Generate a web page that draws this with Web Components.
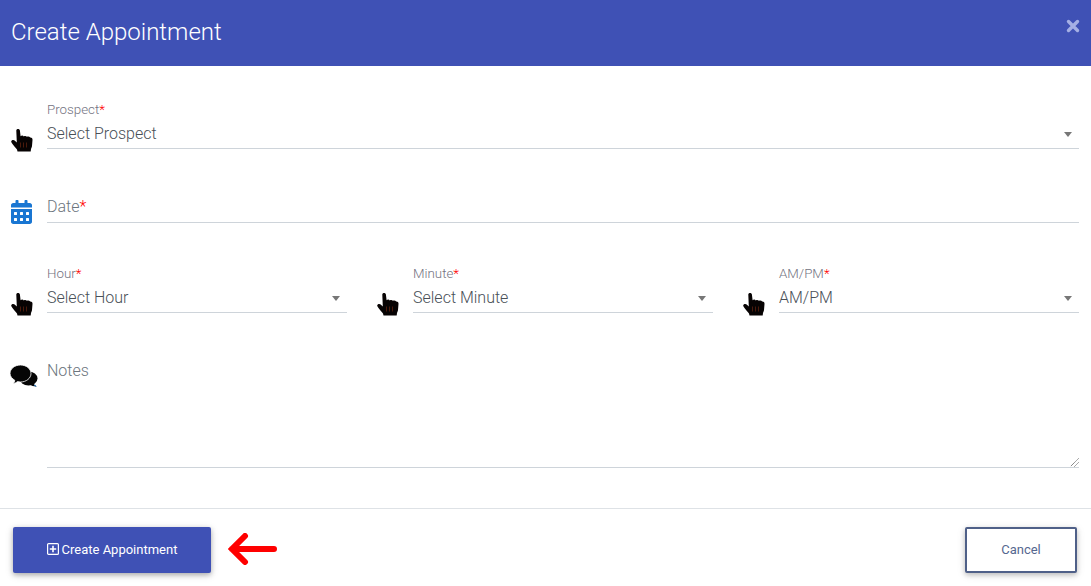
<!DOCTYPE html>
<html><head><meta charset="utf-8"><style>
html,body{margin:0;padding:0;background:#fff;}
body{font-family:Roboto,"Liberation Sans",sans-serif;width:1091px;height:586px;overflow:hidden;}
</style></head><body>
<appt-modal>
  <appt-row style="padding-top:34px;">
    <appt-select label="Prospect" value="Select Prospect"></appt-select>
  </appt-row>
  <appt-row style="padding-top:45px;">
    <appt-date label="Date"></appt-date>
  </appt-row>
  <appt-row style="padding-top:41px;" cols="3">
    <appt-select label="Hour" value="Select Hour"></appt-select>
    <appt-select label="Minute" value="Select Minute"></appt-select>
    <appt-select label="AM/PM" value="AM/PM"></appt-select>
  </appt-row>
  <appt-row style="padding-top:46px;">
    <appt-notes label="Notes"></appt-notes>
  </appt-row>
</appt-modal>
<script>
const HAND = `<svg width="22" height="24" viewBox="0 0 22 24"><path fill="#070303" d="M5.300 2.500C5.300 .5 8.700 .5 8.900 2.500L9.600 8.300C10.500 7.300 12 7.400 12.800 8.400C13.800 7.700 15.200 7.900 15.900 8.800C17 8.200 18.500 8.400 19.200 9.400C20.500 9.200 21.700 10.300 21.500 12L21 18C20.800 19.500 20.200 20.300 20 21L19.700 23.500L6.500 23.500L6 21.500C4.800 20 3 18 1.500 16C0 14.500-.2 13.200.8 12.400C2 11.600 3.400 12.200 4.200 13L5.800 14.500Z"/><path stroke="#4a1a0c" stroke-width="1" d="M9.500 14.500v5M12.500 14.500v5M15.500 14.500v5"/></svg>`;
const CAL = `<svg width="21" height="24" viewBox="0 0 448 512"><path fill="#1976d2" d="M0 464c0 26.500 21.500 48 48 48h352c26.500 0 48-21.500 48-48V192H0v272zm320-196c0-6.600 5.400-12 12-12h40c6.600 0 12 5.400 12 12v40c0 6.600-5.400 12-12 12h-40c-6.600 0-12-5.400-12-12v-40zm0 128c0-6.600 5.400-12 12-12h40c6.600 0 12 5.400 12 12v40c0 6.600-5.400 12-12 12h-40c-6.600 0-12-5.400-12-12v-40zM192 268c0-6.600 5.400-12 12-12h40c6.600 0 12 5.400 12 12v40c0 6.600-5.400 12-12 12h-40c-6.600 0-12-5.400-12-12v-40zm0 128c0-6.600 5.400-12 12-12h40c6.600 0 12 5.400 12 12v40c0 6.600-5.400 12-12 12h-40c-6.600 0-12-5.400-12-12v-40zM64 268c0-6.600 5.400-12 12-12h40c6.600 0 12 5.400 12 12v40c0 6.600-5.400 12-12 12H76c-6.600 0-12-5.400-12-12v-40zm0 128c0-6.600 5.400-12 12-12h40c6.600 0 12 5.400 12 12v40c0 6.600-5.400 12-12 12H76c-6.600 0-12-5.400-12-12v-40zM400 64h-48V16c0-8.800-7.200-16-16-16h-32c-8.800 0-16 7.200-16 16v48H160V16c0-8.800-7.200-16-16-16h-32c-8.800 0-16 7.200-16 16v48H48C21.500 64 0 85.500 0 112v48h448v-48c0-26.500-21.500-48-48-48z"/></svg>`;
const CHAT = `<svg width="27" height="22" viewBox="0 0 27 22" style="overflow:visible"><ellipse cx="17.500" cy="12.500" rx="9" ry="7" fill="#050505"/><path fill="#050505" d="M22 17l1.500 1.800 2 1.700-4-.6-3-1.400z"/><path fill="#1c6fb8" d="M24 18.800l1.800 1.900-1.500-.2-1.600-1.200z"/><path fill="#050505" stroke="#fff" stroke-width=".8" d="M9.500-1C15.300-1 20 2.800 20 7.500S15.300 16 9.500 16c-1 0-2-.1-2.900-.4C5.500 16.500 4 17.300 2.300 17.500c.8-.9 1.300-2 1.500-3.200C1.200 12.800-1 10.300-1 7.500-1 2.800 3.700-1 9.500-1z"/></svg>`;

class ApptModal extends HTMLElement{constructor(){super();this.attachShadow({mode:'open'}).innerHTML=`<style>
:host{display:flex;flex-direction:column;width:1091px;height:586px;}
header{height:66px;flex:none;background:#3f51b5;display:flex;align-items:flex-start;justify-content:space-between;padding:0 11px;box-sizing:border-box;color:#fff;}
h2{margin:0;font:300 24px/64px Roboto,sans-serif;}
.x{margin-top:19px;}
main{flex:1;}
footer{height:78px;box-sizing:border-box;border-top:1px solid #dee2e6;padding:18px 14px 0 13px;display:flex;align-items:flex-start;}
.add{width:198px;height:46px;background:#3f51b5;color:#fff;border:0;border-radius:2px;font:400 13px Roboto,sans-serif;box-shadow:0 2px 5px rgba(0,0,0,.26),0 2px 10px rgba(0,0,0,.12);display:flex;align-items:center;justify-content:center;gap:3px;padding:0 0 2px;}
.arrow{margin:6px 0 0 17px;}
.cancel{margin-left:auto;width:112px;height:46px;box-sizing:border-box;background:#fff;color:#55678f;border:2px solid #4f6088;border-radius:2px;font:400 13px Roboto,sans-serif;box-shadow:0 2px 5px rgba(0,0,0,.2),0 2px 10px rgba(0,0,0,.1);padding:0 0 2px;}
</style>
<header><h2>Create Appointment</h2><svg class="x" width="14" height="14" viewBox="0 0 14 14"><path d="M2.500 2.500l9 9M11.500 2.500l-9 9" stroke="#a5b0e4" stroke-width="3.400" stroke-linecap="round"/></svg></header>
<main><slot></slot></main>
<footer><button class="add"><svg width="12" height="12" viewBox="0 0 12 12"><rect x=".6" y=".6" width="10.800" height="10.800" rx="1" fill="none" stroke="#fff" stroke-width="1.200"/><path d="M6 2.800v6.400M2.800 6h6.400" stroke="#fff" stroke-width="1.600"/></svg>Create Appointment</button>
<svg class="arrow" width="52" height="32" viewBox="0 0 52 32"><path d="M46 16H4M17 3L4 16l13 13" fill="none" stroke="#f00" stroke-width="6" stroke-linecap="round" stroke-linejoin="miter"/></svg>
<button class="cancel">Cancel</button></footer>`;}}
class ApptRow extends HTMLElement{constructor(){super();this.attachShadow({mode:'open'}).innerHTML=`<style>
:host{display:grid;grid-template-columns:1fr;column-gap:30px;padding:0 12px 0 11px;}
:host([cols="3"]){grid-template-columns:repeat(3,1fr);}
</style><slot></slot>`;}}
const fieldCss=`:host{display:grid;grid-template-columns:36px 1fr;}
.ic{align-self:end;display:block;line-height:0;}
.f{border-bottom:1px solid #ced4da;}
.lab{color:#73737f;}
b{color:#f00;font-weight:300;}`;
class ApptSelect extends HTMLElement{constructor(){super();const l=this.getAttribute('label'),v=this.getAttribute('value');this.attachShadow({mode:'open'}).innerHTML=`<style>${fieldCss}
.ic{margin-bottom:-3px;}
.f{height:48px;position:relative;}
.lab{font:300 13.330px/19px Roboto,sans-serif;display:block;}
.v{font:300 16px/24px Roboto,sans-serif;color:#495057;display:block;margin-top:3px;}
.car{position:absolute;right:7px;top:32px;width:0;height:0;border:4px solid transparent;border-top:5px solid #777;border-bottom:0;}
</style><span class="ic">${HAND}</span><div class="f"><span class="lab">${l}<b>*</b></span><span class="v">${v}</span><i class="car"></i></div>`;}}
class ApptDate extends HTMLElement{constructor(){super();const l=this.getAttribute('label');this.attachShadow({mode:'open'}).innerHTML=`<style>${fieldCss}
.ic{margin-bottom:-1px;}
.f{height:28px;}
.lab{font:300 16px/24px Roboto,sans-serif;display:block;padding-top:1px;color:#6c757d;}
</style><span class="ic">${CAL}</span><div class="f"><span class="lab">${l}<b>*</b></span></div>`;}}
class ApptNotes extends HTMLElement{constructor(){super();const l=this.getAttribute('label');this.attachShadow({mode:'open'}).innerHTML=`<style>${fieldCss}
.ic{align-self:start;margin-top:7px;}
.f{height:108px;position:relative;}
.lab{font:300 16px/24px Roboto,sans-serif;display:block;color:#6c757d;}
.g{position:absolute;right:0;bottom:0;}
</style><span class="ic">${CHAT}</span><div class="f"><span class="lab">${l}</span><svg class="g" width="10" height="10" viewBox="0 0 10 10"><path d="M9.500 1.500l-8 8M9.500 5.500l-4 4" stroke="#555" stroke-width="1" stroke-dasharray="1 .6" fill="none"/></svg></div>`;}}
customElements.define('appt-modal',ApptModal);
customElements.define('appt-row',ApptRow);
customElements.define('appt-select',ApptSelect);
customElements.define('appt-date',ApptDate);
customElements.define('appt-notes',ApptNotes);
</script>
</body></html>
